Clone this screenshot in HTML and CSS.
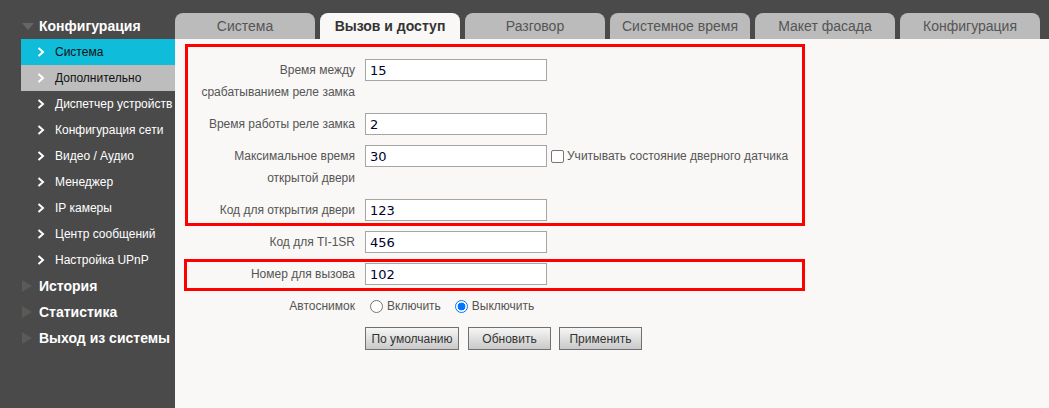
FILE: index.html
```html
<!DOCTYPE html>
<html lang="ru">
<head>
<meta charset="utf-8">
<title>Вызов и доступ</title>
<link rel="stylesheet" href="styles.css">
</head>
<body>
<div class="page">
  <aside class="sidebar">
    <div class="group-head open"><span class="tri-down"></span>Конфигурация</div>
    <ul class="items">
      <li class="item active"><svg class="chev" viewBox="0 0 8 10"><polyline points="1.5,1 6,5 1.5,9"/></svg>Система</li>
      <li class="item hover"><svg class="chev" viewBox="0 0 8 10"><polyline points="1.5,1 6,5 1.5,9"/></svg>Дополнительно</li>
      <li class="item"><svg class="chev" viewBox="0 0 8 10"><polyline points="1.5,1 6,5 1.5,9"/></svg>Диспетчер устройств</li>
      <li class="item"><svg class="chev" viewBox="0 0 8 10"><polyline points="1.5,1 6,5 1.5,9"/></svg>Конфигурация сети</li>
      <li class="item"><svg class="chev" viewBox="0 0 8 10"><polyline points="1.5,1 6,5 1.5,9"/></svg>Видео / Аудио</li>
      <li class="item"><svg class="chev" viewBox="0 0 8 10"><polyline points="1.5,1 6,5 1.5,9"/></svg>Менеджер</li>
      <li class="item"><svg class="chev" viewBox="0 0 8 10"><polyline points="1.5,1 6,5 1.5,9"/></svg>IP камеры</li>
      <li class="item"><svg class="chev" viewBox="0 0 8 10"><polyline points="1.5,1 6,5 1.5,9"/></svg>Центр сообщений</li>
      <li class="item"><svg class="chev" viewBox="0 0 8 10"><polyline points="1.5,1 6,5 1.5,9"/></svg>Настройка UPnP</li>
    </ul>
    <div class="group-head"><span class="tri-right"></span>История</div>
    <div class="group-head"><span class="tri-right"></span>Статистика</div>
    <div class="group-head"><span class="tri-right"></span>Выход из системы</div>
  </aside>
  <main class="main">
    <nav class="tabs">
      <div class="tab">Система</div>
      <div class="tab active">Вызов и доступ</div>
      <div class="tab">Разговор</div>
      <div class="tab">Системное время</div>
      <div class="tab">Макет фасада</div>
      <div class="tab">Конфигурация</div>
    </nav>
    <section class="content">
      <div class="form">
        <div class="row">
          <div class="label">Время между<br>срабатыванием реле замка</div>
          <div class="field"><input class="text" type="text" value="15"></div>
        </div>
        <div class="row">
          <div class="label">Время работы реле замка</div>
          <div class="field"><input class="text" type="text" value="2"></div>
        </div>
        <div class="row">
          <div class="label">Максимальное время<br>открытой двери</div>
          <div class="field"><input class="text" type="text" value="30"><label class="check"><span class="box"></span>Учитывать состояние дверного датчика</label></div>
        </div>
        <div class="row">
          <div class="label">Код для открытия двери</div>
          <div class="field"><input class="text" type="text" value="123"></div>
        </div>
        <div class="row">
          <div class="label">Код для TI-1SR</div>
          <div class="field"><input class="text" type="text" value="456"></div>
        </div>
        <div class="row">
          <div class="label">Номер для вызова</div>
          <div class="field"><input class="text" type="text" value="102"></div>
        </div>
        <div class="row">
          <div class="label">Автоснимок</div>
          <div class="field radios">
            <label class="radio"><span class="dot"></span>Включить</label>
            <label class="radio"><span class="dot on"></span>Выключить</label>
          </div>
        </div>
        <div class="row">
          <div class="label"></div>
          <div class="field buttons">
            <button class="btn wide">По умолчанию</button>
            <button class="btn">Обновить</button>
            <button class="btn">Применить</button>
          </div>
        </div>
      </div>
      <div class="mark mark-a"></div>
      <div class="mark mark-b"></div>
    </section>
  </main>
</div>
</body>
</html>
```
FILE: styles.css
```css
* { box-sizing: border-box; }
html, body { margin: 0; padding: 0; }
body {
  width: 1049px;
  height: 408px;
  overflow: hidden;
  background: #4a4a4a;
  font-family: "Liberation Sans", Arial, sans-serif;
}
.page { display: flex; height: 408px; }

/* Sidebar */
.sidebar { width: 175px; flex: none; padding-top: 13px; background: #4a4a4a; }
.group-head {
  height: 26px;
  line-height: 26px;
  display: flex;
  align-items: center;
  color: #fff;
  font-weight: bold;
  font-size: 14px;
  padding-left: 22px;
  white-space: nowrap;
}
.tri-down {
  width: 0; height: 0;
  border-left: 6px solid transparent;
  border-right: 6px solid transparent;
  border-top: 7px solid #666;
  margin-right: 5px;
  margin-top: 1px;
}
.tri-right {
  width: 0; height: 0;
  border-top: 6px solid transparent;
  border-bottom: 6px solid transparent;
  border-left: 10px solid #5a5a56;
  margin-right: 7px;
}
.items { list-style: none; margin: 0; padding: 0; }
.item {
  margin-left: 21px;
  height: 26px;
  display: flex;
  align-items: center;
  padding-left: 16px;
  color: #fff;
  font-size: 12px;
  white-space: nowrap;
  overflow: hidden;
}
.item.active { background: #0fbcd9; color: #111; }
.item.hover { background: #bdbdbd; color: #111; }
.chev { width: 8px; height: 10px; margin-right: 10px; flex: none; }
.chev polyline { fill: none; stroke: #fff; stroke-width: 2; }

/* Main */
.main { flex: 1; display: flex; flex-direction: column; }
.tabs { display: flex; gap: 5px; padding-top: 13px; height: 39px; }
.tab {
  width: 140px;
  height: 26px;
  background: #bbbbbb;
  border-radius: 8px 8px 0 0;
  text-align: center;
  line-height: 26px;
  font-size: 14px;
  color: #555;
}
.tab.active { background: #f9f8f6; color: #333; font-weight: bold; }

.content {
  position: relative;
  flex: 1;
  background: #f9f8f6;
  padding-top: 15px;
}
.form { display: flex; flex-direction: column; }
.row { display: flex; padding: 5px 0; }
.label {
  width: 180px;
  padding-left: 10px;
  flex: none;
  text-align: right;
  font-size: 12px;
  line-height: 22px;
  color: #555;
  white-space: nowrap;
}
.field { margin-left: 10px; display: flex; align-items: flex-start; }
.text {
  width: 182px;
  height: 22px;
  border: 1px solid #a6a6a6;
  background: #fff;
  padding: 0 4px;
  font-family: "DejaVu Sans", Verdana, sans-serif;
  font-size: 13px;
  color: #000030;
  margin: 0;
  outline: none;
}
.check {
  display: flex;
  align-items: center;
  height: 22px;
  margin-left: 4px;
  font-size: 12px;
  color: #555;
}
.box {
  width: 13px; height: 13px;
  border: 1px solid #767676;
  border-radius: 2px;
  background: #fff;
  margin-right: 3px;
}
.radios { height: 22px; align-items: center; margin-left: 15px; gap: 14px; }
.radio { display: flex; align-items: center; font-size: 12px; color: #555; }
.dot {
  width: 13px; height: 13px;
  border: 1px solid #767676;
  border-radius: 50%;
  background: #fff;
  margin-right: 4px;
  display: inline-block;
}
.dot.on {
  border: 1px solid #0075ff;
  background: radial-gradient(circle, #0075ff 0 3.6px, #fff 4.2px);
}
.buttons { gap: 8px; }
.btn {
  width: 83px;
  height: 23px;
  border: 1px solid #707070;
  background: linear-gradient(#f6f6f6, #c9c9c9);
  font-family: "Liberation Sans", Arial, sans-serif;
  font-size: 12px;
  color: #333;
  padding: 0;
  margin: 0;
}
.btn.wide { width: 94px; margin-right: 1px; }

/* Annotation overlays */
.mark { position: absolute; border: 3px solid #ff0000; pointer-events: none; }
.mark-a { left: 10px; top: 5px; width: 620px; height: 182px; }
.mark-b { left: 9px; top: 220px; width: 621px; height: 32px; }
```
